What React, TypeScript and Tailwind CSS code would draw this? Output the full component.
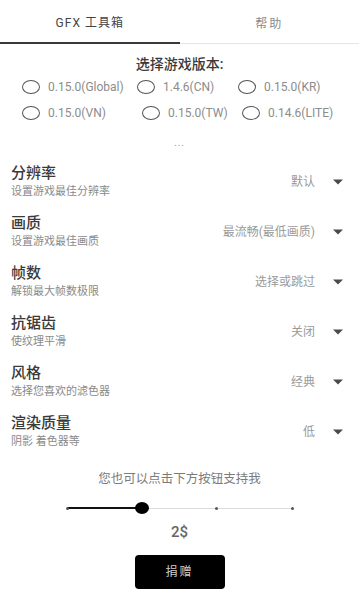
import React from 'react';

const font = { fontFamily: 'Roboto, "Noto Sans CJK SC", sans-serif' };

const radioRows = [
  [
    { label: '0.15.0(Global)', w: 'w-[115px]' },
    { label: '1.4.6(CN)', w: 'w-[101px]' },
    { label: '0.15.0(KR)', w: 'w-[100px]' },
  ],
  [
    { label: '0.15.0(VN)', w: 'w-[120px]' },
    { label: '0.15.0(TW)', w: 'w-[100px]' },
    { label: '0.14.6(LITE)', w: 'w-[100px]' },
  ],
];

const settings = [
  { title: '分辨率', desc: '设置游戏最佳分辨率', value: '默认' },
  { title: '画质', desc: '设置游戏最佳画质', value: '最流畅(最低画质)' },
  { title: '帧数', desc: '解锁最大帧数极限', value: '选择或跳过' },
  { title: '抗锯齿', desc: '使纹理平滑', value: '关闭' },
  { title: '风格', desc: '选择您喜欢的滤色器', value: '经典' },
  { title: '渲染质量', desc: '阴影 着色器等', value: '低' },
];

const steps = [0, 1, 2, 3];
const current = 1;

const Caret = () => (
  <svg width="10" height="6" viewBox="0 0 10 6" className="ml-[18px]">
    <path d="M0 0.5 L10 0.5 L5 5.5 Z" fill="#4a4a4a" />
  </svg>
);

export default function App() {
  return (
    <div className="w-full min-h-[600px] bg-white" style={font}>
      {/* tabs */}
      <div className="flex h-[44px]">
        <div className="flex-1 flex items-center justify-center pt-[4px] border-b-[2.5px] border-[#3a3a3a] text-[12px] tracking-[1px] text-[#444]">
          GFX 工具箱
        </div>
        <div className="flex-1 flex items-center justify-center pt-[4px] border-b border-[#e6e6e6] text-[12px] tracking-[2px] text-[#8a8a8a]">
          帮助
        </div>
      </div>

      <div className="mt-[10px] text-center text-[14px] leading-[20px] font-medium text-[#3a3a3a]">选择游戏版本:</div>

      <div className="mt-[3px] flex flex-col gap-[6px]">
        {radioRows.map((row, i) => (
          <div key={i} className="flex pl-[22px] h-[20px] items-center">
            {row.map((r) => (
              <div key={r.label} className={`${r.w} flex items-center shrink-0`}>
                <span className="w-[18px] h-[14px] rounded-[50%] border-[1.5px] border-[#555] shrink-0" />
                <span className="ml-[8px] text-[12px] text-[#8c8c8c] whitespace-nowrap">{r.label}</span>
              </div>
            ))}
          </div>
        ))}
      </div>

      <div className="mt-[12px] text-center text-[10px] leading-[16px] text-[#999] tracking-[1px]">...</div>

      <div className="mt-[12px]">
        {settings.map((s) => (
          <div key={s.title} className="flex items-center pl-[11px] pr-[16px] pb-[13px]">
            <div className="flex-1">
              <div className="text-[15px] leading-[20px] font-medium text-[#3a3a3a]">{s.title}</div>
              <div className="mt-[1px] text-[11px] leading-[16px] text-[#8a8a8a]">{s.desc}</div>
            </div>
            <span className="text-[12px] text-[#9a9a9a]">{s.value}</span>
            <Caret />
          </div>
        ))}
      </div>

      <div className="mt-[7px] text-center text-[12.5px] leading-[18px] text-[#7a7a7a]">您也可以点击下方按钮支持我</div>

      {/* slider */}
      <div className="mt-[13px] mx-auto w-[225px] h-[14px] relative">
        <div className="absolute left-0 right-0 top-[6.5px] h-px bg-[#dcdcdc]" />
        <div
          className="absolute left-0 top-[6px] h-[2px] bg-[#111]"
          style={{ width: `${(current / (steps.length - 1)) * 100}%` }}
        />
        {steps.map((s) => (
          <span
            key={s}
            className="absolute top-[5.5px] w-[3px] h-[3px] -ml-[1.5px] rounded-full bg-[#555]"
            style={{ left: `${(s / (steps.length - 1)) * 100}%` }}
          />
        ))}
        <span
          className="absolute top-[1px] w-[14px] h-[12px] -ml-[7px] rounded-[50%] bg-black"
          style={{ left: `${(current / (steps.length - 1)) * 100}%` }}
        />
      </div>

      <div className="mt-[7px] text-center text-[15px] leading-[20px] font-medium text-[#666]">2$</div>

      <div className="mt-[13px] flex justify-center">
        <button className="w-[90px] h-[34px] rounded-[4px] bg-black text-[12px] tracking-[2px] text-[#d0d0d0]">捐赠</button>
      </div>
    </div>
  );
}
